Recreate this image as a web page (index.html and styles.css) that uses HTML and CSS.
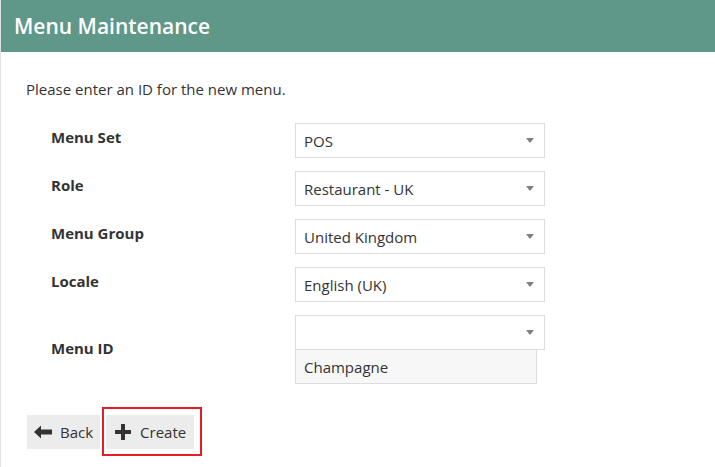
FILE: index.html
```html
<!DOCTYPE html>
<html lang="en">
<head>
<meta charset="utf-8">
<title>Menu Maintenance</title>
<link rel="stylesheet" href="styles.css">
</head>
<body>
<div class="page">
  <header class="header"><h1 class="title">Menu Maintenance</h1></header>
  <main class="content">
    <p class="intro">Please enter an ID for the new menu.</p>
    <div class="form">
      <div class="row">
        <label class="label">Menu Set</label>
        <div class="field"><div class="select"><span>POS</span><i class="caret"></i></div></div>
      </div>
      <div class="row">
        <label class="label">Role</label>
        <div class="field"><div class="select"><span>Restaurant - UK</span><i class="caret"></i></div></div>
      </div>
      <div class="row">
        <label class="label">Menu Group</label>
        <div class="field"><div class="select"><span>United Kingdom</span><i class="caret"></i></div></div>
      </div>
      <div class="row">
        <label class="label">Locale</label>
        <div class="field"><div class="select"><span>English (UK)</span><i class="caret"></i></div></div>
      </div>
      <div class="row row-id">
        <label class="label">Menu ID</label>
        <div class="field">
          <div class="select"><span></span><i class="caret"></i></div>
          <div class="option">Champagne</div>
        </div>
      </div>
    </div>
    <div class="actions">
      <button class="btn" type="button">
        <svg class="icon" width="18" height="14" viewBox="0 0 18 14"><path d="M0 7 L7 0.5 L7 4.5 L18 4.5 L18 9.5 L7 9.5 L7 13.5 Z" fill="#333"/></svg>
        <span>Back</span>
      </button>
      <span class="highlight">
        <button class="btn btn-create" type="button">
          <svg class="icon" width="16" height="16" viewBox="0 0 16 16"><path d="M6 0 H10 V6 H16 V10 H10 V16 H6 V10 H0 V6 H6 Z" fill="#333"/></svg>
          <span>Create</span>
        </button>
      </span>
    </div>
  </main>
</div>
</body>
</html>
```
FILE: styles.css
```css
html, body {
  margin: 0;
  padding: 0;
  background: #fff;
}
body {
  font-family: "Open Sans", "Liberation Sans", sans-serif;
  color: #333;
  font-size: 15px;
}
.page {
  border-left: 1px solid #e2e2e2;
  min-height: 467px;
  box-sizing: border-box;
}
.header {
  background: #5f9788;
  height: 52px;
  display: flex;
  align-items: center;
  padding-left: 13px;
}
.title {
  margin: 0;
  color: #fff;
  font-size: 21px;
  font-weight: 600;
  line-height: 1;
  padding-top: 1px;
}
.content {
  padding: 27px 0 0 25px;
}
.intro {
  margin: 0 0 24px 0;
  line-height: 20px;
}
.form {
  display: flex;
  flex-direction: column;
  gap: 13px;
}
.row {
  display: grid;
  grid-template-columns: 269px 250px;
  align-items: center;
}
.label {
  padding-left: 25px;
  font-weight: 700;
  padding-bottom: 8px;
  line-height: 20px;
}
.row-id .label {
  padding-bottom: 4px;
}
.field {
  display: flex;
  flex-direction: column;
}
.select {
  height: 35px;
  box-sizing: border-box;
  border: 1px solid #dcdcdc;
  display: flex;
  align-items: center;
  justify-content: space-between;
  padding: 0 10px 0 8px;
  background: #fff;
}
.caret {
  width: 0;
  height: 0;
  border-left: 4px solid transparent;
  border-right: 4px solid transparent;
  border-top: 5px solid #808080;
}
.option {
  width: 242px;
  height: 34px;
  box-sizing: border-box;
  border: 1px solid #dcdcdc;
  border-top: none;
  background: #f7f7f7;
  display: flex;
  align-items: center;
  padding: 0 8px;
}
.actions {
  display: flex;
  align-items: center;
  gap: 6px;
  margin-top: 31px;
  padding-left: 1px;
}
.btn {
  font-family: inherit;
  font-size: 15px;
  color: #333;
  background: #ececec;
  border: none;
  height: 34px;
  display: flex;
  align-items: center;
  gap: 8px;
  padding: 0 7px 0 7px;
  cursor: pointer;
}
.btn-create {
  padding: 0 8px 0 9px;
  gap: 9px;
}
.icon {
  display: block;
}
.highlight {
  position: relative;
  display: inline-block;
}
.highlight::after {
  content: "";
  position: absolute;
  left: -4px;
  right: -8px;
  top: -8px;
  bottom: -7px;
  border: 2px solid #e31e24;
  pointer-events: none;
}
```
